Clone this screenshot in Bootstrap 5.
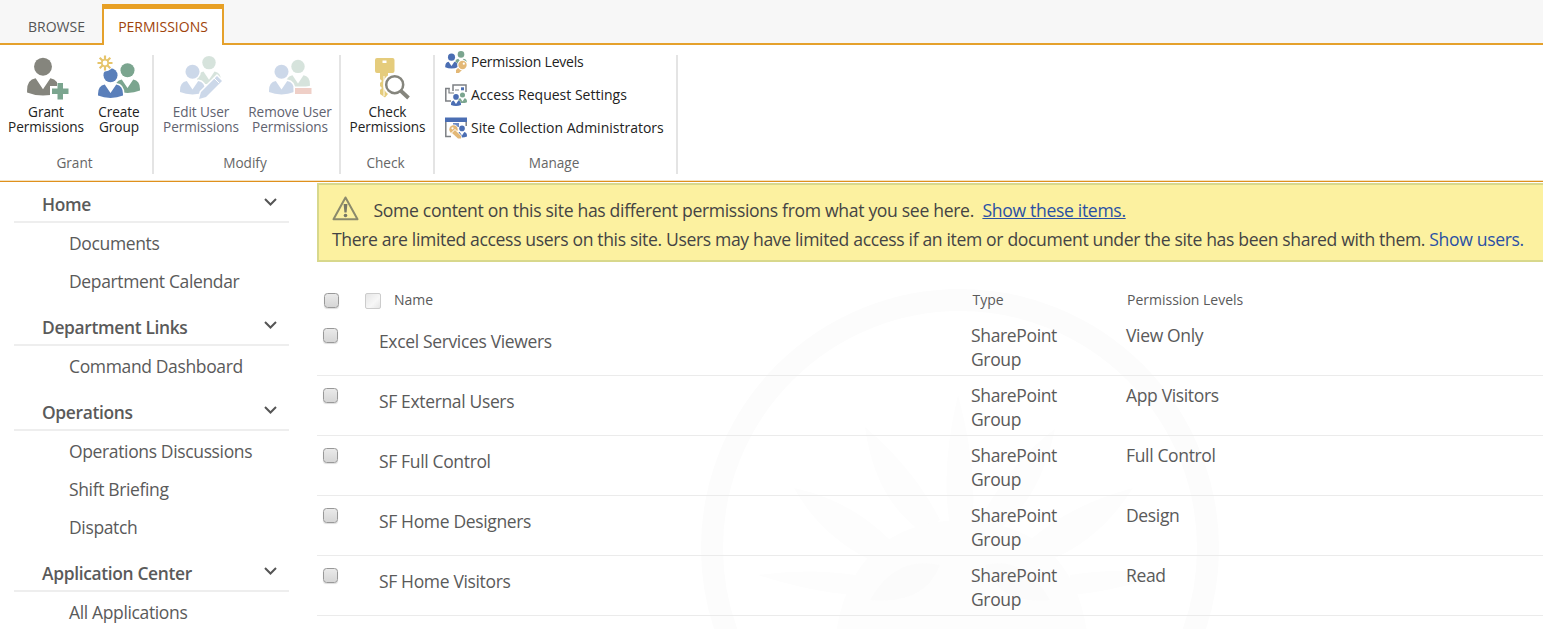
<!DOCTYPE html>
<html lang="en">
<head>
<meta charset="utf-8">
<meta name="viewport" content="width=device-width, initial-scale=1">
<title>Permissions</title>
<link href="https://cdn.jsdelivr.net/npm/bootstrap@5.3.0/dist/css/bootstrap.min.css" rel="stylesheet">
<style>
  body { font-family: "Open Sans", "Noto Sans", sans-serif; color: #5a5a5a; height: 629px; overflow: hidden; background: #fff; }
  .tabbar { height: 45px; background: #f7f7f7; border-bottom: 2px solid #e5a12c; padding-top: 4px; }
  .tabbar a { font-size: 14px; color: #555; text-decoration: none; line-height: 46px; height: 39px; }
  .tabbar .browse { width: 102px; padding-left: 28px; }
  .tabbar .current { width: 122px; height: 41px; line-height: 36px; background: #fff; color: #a0430a; border: 2px solid #e5a12c; border-top: 5px solid #e8a024; border-bottom: 0; text-align: center; }
  .ribbon { height: 137px; border-bottom: 1px solid #e0901c; box-shadow: inset 0 -1px #f3e2c2; }
  .rgroup { height: 119px; margin-top: 10px; border-right: 2px solid #e4e4e4; }
  .rgroup .gtitle { font-size: 13.6px; line-height: 20px; color: #666; padding: 0 3px 1px 0; }
  .tool { border: 0; padding: 0; background: none; font-size: 13.6px; letter-spacing: -.08px; line-height: 15px; color: #222; height: 82px; margin-top: -3px; }
  .tool svg, .mini svg { display: block; }
  .tool.off { color: #5f6370; }
  .tool.off svg { opacity: .3; }
  .mini { font-size: 14px; height: 33px; color: #222; gap: 4px; }
  .mini .tight { letter-spacing: -.22px; }
  .mini-list { padding-left: 10px; margin-top: -10px; }
  .side { width: 275px; margin-left: 14px; margin-top: -5px; }
  .side h2 { font-size: 17.4px; font-weight: 600; height: 37px; margin: 9px 0 1px; padding: 2px 12px 0 28px; border-bottom: 2px solid #eee; letter-spacing: -.34px; }
  .side h2 svg { margin-top: -4px; }
  .side a { font-size: 17.5px; letter-spacing: -.36px; height: 38px; line-height: 38px; padding-left: 55px; color: #5a5a5a; text-decoration: none; }
  .content { margin-left: 28px; }
  .notice { height: 79px; margin-top: 1px; background: #fcf1a0; border: 2px solid #d8d88c; border-right: 0; padding: 11px 0 0 13px; color: #444; font-size: 17.6px; letter-spacing: -.36px; line-height: 29px; white-space: nowrap; }
  .notice svg { margin-right: 14.5px; }
  .notice .line1 { letter-spacing: -.33px; }
  .notice a { color: #2a50a4; }
  .prow { display: grid; grid-template-columns: 62px 592px 155px 1fr; height: 60px; border-bottom: 1px solid #ebebeb; font-size: 17.5px; letter-spacing: -.35px; line-height: 24px; padding-top: 7px; }
  .prow .who { padding-top: 6px; }
  .phead { display: grid; grid-template-columns: 48px 607.5px 154.5px 1fr; height: 54px; padding-top: 26px; font-size: 14px; line-height: 24px; }
  .pick { width: 15px; height: 15px; margin: 5px 0 0 5.5px; border: 1px solid #999; border-radius: 3.5px; background: linear-gradient(#eaeaea, #d6d6d6); appearance: none; box-shadow: 0 1px 1px #ddd; }
  .phead .pick { margin-left: 6.5px; margin-top: 5px; }
  .ghost { width: 16px; height: 16px; border: 1px solid #ccc; border-radius: 2px; background: linear-gradient(135deg, #e6e6e6, #f7f7f7 60%, #e6e6e6); margin-top: 2px; margin-right: 13px; }
  .watermark { position: absolute; left: 380px; top: 100px; z-index: -1; }
</style>
</head>
<body>
<svg width="0" height="0" class="position-absolute" aria-hidden="true">
  <symbol id="person" viewBox="0 0 26 31" overflow="visible">
    <circle cx="13" cy="7.5" r="7.3"/>
    <path d="M7 17 L13 26 L19 17 Q26 18 26 27 V28.500 Q20 31 13 31 T0 28.500 V27 Q0 18 7 17Z"/>
  </symbol>
</svg>

<nav class="tabbar d-flex">
  <a class="browse" href="#">BROWSE</a>
  <a class="current" href="#">PERMISSIONS</a>
</nav>

<div class="ribbon d-flex">
  <section class="rgroup d-flex flex-column justify-content-between" style="width:154px">
    <div class="d-flex">
      <button class="tool" style="width:92px">
        <svg width="92" height="51" viewBox="0 52 92 51">
          <use href="#person" x="27" y="56.500" width="32" height="38" fill="#85857d"/>
          <path d="M57 80h8v5h6v10h-6v6h-8v-6h-7V85h7z" fill="#fff"/>
          <path d="M57.500 82h5.500v5.500h5.500v5.500H63v5.500h-5.500V93H52v-5.500h5.500z" fill="#7ba58f"/>
        </svg>Grant<br>Permissions
      </button>
      <button class="tool" style="width:54px">
        <svg width="54" height="51" viewBox="92 52 54 51">
          <use href="#person" x="115" y="62" width="25" height="30" fill="#7ba58f"/>
          <use href="#person" x="98" y="66.500" width="25" height="31" fill="#5a7fba" stroke="#fff" stroke-width="3" paint-order="stroke"/>
          <circle cx="105" cy="62" r="8.500" fill="#fff"/>
          <path d="M105 54.500v15M97.500 62h15M99.700 56.700l10.600 10.600M110.300 56.700L99.700 67.300" stroke="#e6c46a" stroke-width="2.200"/>
          <circle cx="105" cy="62" r="3.200" fill="#fff" stroke="#e6c46a" stroke-width="1.600"/>
        </svg>Create<br>Group
      </button>
    </div>
    <div class="gtitle text-center">Grant</div>
  </section>

  <section class="rgroup d-flex flex-column justify-content-between" style="width:187px">
    <div class="d-flex">
      <button class="tool off" style="width:94px">
        <svg width="94" height="51" viewBox="154 52 94 51">
          <use href="#person" x="197" y="54.500" width="24" height="29" fill="#7ba58f"/>
          <use href="#person" x="180" y="63.500" width="25" height="30" fill="#5a7fba" stroke="#fff" stroke-width="3" paint-order="stroke"/>
          <path d="M199 98l2-7 16-16 5 5-16 16z" fill="#5a7fba" stroke="#fff" stroke-width="3" paint-order="stroke"/>
          <path d="M214 77l5 5" stroke="#fff"/>
        </svg>Edit User<br>Permissions
      </button>
      <button class="tool off" style="width:84px">
        <svg width="84" height="51" viewBox="248 52 84 51">
          <use href="#person" x="286" y="58.500" width="24" height="28.500" fill="#7ba58f"/>
          <use href="#person" x="269" y="63.500" width="25" height="30" fill="#5a7fba" stroke="#fff" stroke-width="3" paint-order="stroke"/>
          <path d="M295 87h16.500v6H295z" fill="#cb624a" stroke="#fff" stroke-width="3" paint-order="stroke"/>
        </svg>Remove User<br>Permissions
      </button>
    </div>
    <div class="gtitle text-center">Modify</div>
  </section>

  <section class="rgroup d-flex flex-column justify-content-between" style="width:94px">
    <button class="tool" style="width:93px">
      <svg width="93" height="51" viewBox="341 52 93 51">
        <path fill-rule="evenodd" fill="#e5cc7c" d="M377 57h15.500q2 0 2 2v11q0 2-2 2H388v21l-3 3.500-5-3.500v-4l2-2-2-2v-3l2-2-2-2v-6h-3q-2 0-2-2V59q0-2 2-2zM382.500 59.500v2.500h4v-2.500z"/>
        <path d="M384 75v20" stroke="#fff" stroke-width="1"/>
        <circle cx="394.700" cy="83.700" r="8.700" fill="#fff" stroke="#fff" stroke-width="5.500"/>
        <circle cx="394.700" cy="83.700" r="8.500" fill="#fff" stroke="#85857d" stroke-width="2.500"/>
        <path d="M401 90l7.500 7" stroke="#85857d" stroke-width="3.800"/>
      </svg>Check<br>Permissions
    </button>
    <div class="gtitle text-center">Check</div>
  </section>

  <section class="rgroup d-flex flex-column justify-content-between" style="width:243px">
    <div class="mini-list">
      <div class="mini d-flex align-items-center">
        <svg width="22" height="22" viewBox="0 0 22 22">
          <use href="#person" x="10" y="0" width="12" height="14" fill="#7ba58f"/>
          <use href="#person" x="0" y="2.500" width="13" height="15" fill="#4b6eb3" stroke="#fff" stroke-width="2" paint-order="stroke"/>
          <g fill="#e3b876" stroke="#fff" paint-order="stroke" stroke-width="2"><path d="M16 14l-5 5v3h3l5-5z"/><circle cx="17.500" cy="14" r="4.200"/></g><circle cx="18.800" cy="12.700" r="1.100" fill="#fff"/>
        </svg>
        <span class="tight">Permission Levels</span>
      </div>
      <div class="mini d-flex align-items-center">
        <svg width="22" height="22" viewBox="0 0 22 22">
          <path d="M6 17H.8V4.500h4M8 7v-6h13v7" fill="none" stroke="#7d8084" stroke-width="1.500"/>
          <path d="M4 4v5h5M10 6h4" fill="none" stroke="#7d8084" stroke-width="1.200"/>
          <path d="M16 3.300h3v3h-3z" fill="#4b6eb3"/>
          <use href="#person" x="13" y="8" width="9" height="11.500" fill="#7ba58f"/>
          <use href="#person" x="6" y="10" width="10" height="12" fill="#4b6eb3" stroke="#fff" stroke-width="2" paint-order="stroke"/>
        </svg>
        <span>Access Request Settings</span>
      </div>
      <div class="mini d-flex align-items-center">
        <svg width="22" height="22" viewBox="0 0 22 22">
          <path d="M.8 4v15.500H6M21.200 4v5" fill="none" stroke="#7d8084" stroke-width="1.500"/>
          <path d="M0 .5h22v4.500H0z" fill="#4b6eb3"/>
          <path d="M8 6h6v4H8z" fill="#6f8dc5"/>
          <use href="#person" x="12" y="7.500" width="10" height="14" fill="#4b6eb3"/>
          <g fill="#e3b876" stroke="#fff" paint-order="stroke" stroke-width="1.500"><circle cx="8.500" cy="12.500" r="4.200"/><path d="M10 13l6 6v2.500h-3L7 16z"/></g><circle cx="7.500" cy="11.300" r="1.100" fill="#fff"/>
        </svg>
        <span>Site Collection Administrators</span>
      </div>
    </div>
    <div class="gtitle text-center">Manage</div>
  </section>
</div>

<div class="d-flex">
  <aside class="side flex-shrink-0 d-flex flex-column">
    <h2 class="d-flex align-items-center justify-content-between">Home <svg width="13" height="12" viewBox="0 0 13 12"><path d="M1 2l5.500 5.500L12 2" fill="none" stroke="#555" stroke-width="2"/></svg></h2>
    <a href="#">Documents</a>
    <a href="#">Department Calendar</a>
    <h2 class="d-flex align-items-center justify-content-between">Department Links <svg width="13" height="12" viewBox="0 0 13 12"><path d="M1 2l5.500 5.500L12 2" fill="none" stroke="#555" stroke-width="2"/></svg></h2>
    <a href="#">Command Dashboard</a>
    <h2 class="d-flex align-items-center justify-content-between">Operations <svg width="13" height="12" viewBox="0 0 13 12"><path d="M1 2l5.500 5.500L12 2" fill="none" stroke="#555" stroke-width="2"/></svg></h2>
    <a href="#">Operations Discussions</a>
    <a href="#">Shift Briefing</a>
    <a href="#">Dispatch</a>
    <h2 class="d-flex align-items-center justify-content-between">Application Center <svg width="13" height="12" viewBox="0 0 13 12"><path d="M1 2l5.500 5.500L12 2" fill="none" stroke="#555" stroke-width="2"/></svg></h2>
    <a href="#">All Applications</a>
  </aside>

  <main class="content flex-grow-1 position-relative">
    <svg class="watermark" width="530" height="350" viewBox="697 282 530 350" fill="#fdfdfd" aria-hidden="true">
      <circle cx="960" cy="548" r="248" fill="none" stroke="#fcfcfc" stroke-width="22"/>
      <path d="M958 395Q940 470 950 525H972Q978 470 958 395ZM865 427Q875 500 922 532L940 520Q915 470 865 427ZM1055 429Q1010 462 980 520L998 530Q1040 500 1055 429ZM794 488Q820 535 870 560L890 540Q850 500 794 488ZM1133 488Q1070 505 1030 540L1050 560Q1100 540 1133 488ZM758 575Q810 592 855 595V575Q810 568 758 575ZM1165 575Q1120 567 1070 575V595Q1110 592 1165 575Z"/>
      <path d="M835 640Q850 523 960 520Q1075 523 1088 640Z"/>
      <path d="M870 600Q895 555 940 565Q925 605 870 600ZM1050 600Q1025 555 985 565Q998 605 1050 600Z" fill="#fbfbfb"/>
    </svg>

    <div class="notice">
      <div class="d-flex"><svg width="27" height="25" viewBox="0 0 27 25"><path d="M13.500 1.500L25.500 23.300H1.500Z" fill="none" stroke="#8b8a6b" stroke-width="2" stroke-linejoin="round"/><path d="M11.600 8h3.800l-.8 8.500h-2.200z" fill="#777866"/><circle cx="13.500" cy="19.500" r="1.800" fill="#777866"/></svg><span class="line1">Some content on this site has different permissions from what you see here.&nbsp; <a href="#">Show these items.</a></span></div>
      <div>There are limited access users on this site. Users may have limited access if an item or document under the site has been shared with them. <a class="text-decoration-none" href="#">Show users.</a></div>
    </div>

    <div class="phead">
      <div><input class="pick d-block" type="checkbox" aria-label="Select all"></div>
      <div class="d-flex align-items-center align-self-start"><span class="ghost"></span>Name</div><div>Type</div><div>Permission Levels</div>
    </div>
    <div class="prow"><div><input class="pick d-block" type="checkbox" aria-label="Select"></div><div class="who">Excel Services Viewers</div><div>SharePoint<br>Group</div><div>View Only</div></div>
    <div class="prow"><div><input class="pick d-block" type="checkbox" aria-label="Select"></div><div class="who">SF External Users</div><div>SharePoint<br>Group</div><div>App Visitors</div></div>
    <div class="prow"><div><input class="pick d-block" type="checkbox" aria-label="Select"></div><div class="who">SF Full Control</div><div>SharePoint<br>Group</div><div>Full Control</div></div>
    <div class="prow"><div><input class="pick d-block" type="checkbox" aria-label="Select"></div><div class="who">SF Home Designers</div><div>SharePoint<br>Group</div><div>Design</div></div>
    <div class="prow"><div><input class="pick d-block" type="checkbox" aria-label="Select"></div><div class="who">SF Home Visitors</div><div>SharePoint<br>Group</div><div>Read</div></div>
  </main>
</div>
<script src="https://cdn.jsdelivr.net/npm/bootstrap@5.3.0/dist/js/bootstrap.bundle.min.js"></script>
</body>
</html>
